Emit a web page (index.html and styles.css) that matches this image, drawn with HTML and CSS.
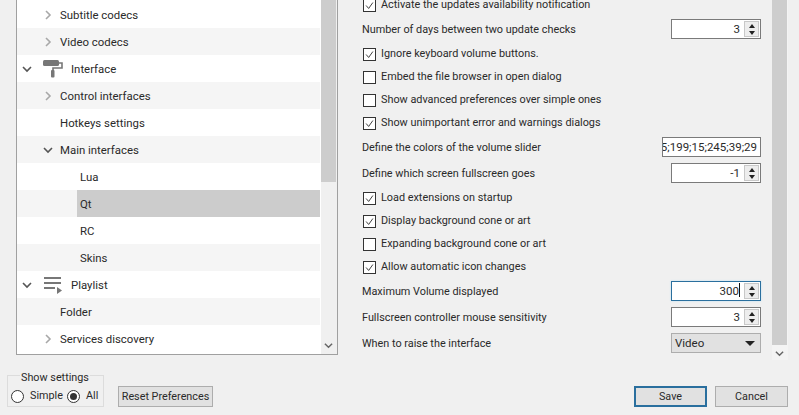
FILE: index.html
```html
<!DOCTYPE html>
<html lang="en">
<head>
<meta charset="utf-8">
<title>Preferences</title>
<link rel="stylesheet" href="styles.css">
</head>
<body>
<div class="window">
  <div class="panes">
    <div class="tree">
      <div class="tree-list">
        <div class="row lvl1"><svg class="chev" viewBox="0 0 10 10"><path d="M3 1l4 4-4 4"/></svg><span>Subtitle codecs</span></div>
        <div class="row alt lvl1"><svg class="chev" viewBox="0 0 10 10"><path d="M3 1l4 4-4 4"/></svg><span>Video codecs</span></div>
        <div class="row lvl0"><svg class="chev dark" viewBox="0 0 10 10"><path d="M1 3l4 4 4-4"/></svg>
          <svg class="cat" viewBox="0 0 20 18"><rect x="0" y="0" width="16" height="6" rx="1.5"/><path class="roller" d="M16 3h3v5h-9v3"/><rect x="8" y="10" width="3.5" height="7.5" rx="1"/></svg><span>Interface</span></div>
        <div class="row alt lvl1"><svg class="chev" viewBox="0 0 10 10"><path d="M3 1l4 4-4 4"/></svg><span>Control interfaces</span></div>
        <div class="row lvl1"><i class="chev"></i><span>Hotkeys settings</span></div>
        <div class="row alt lvl1"><svg class="chev dark" viewBox="0 0 10 10"><path d="M1 3l4 4 4-4"/></svg><span>Main interfaces</span></div>
        <div class="row lvl2"><span>Lua</span></div>
        <div class="row lvl2 selected"><span>Qt</span></div>
        <div class="row lvl2"><span>RC</span></div>
        <div class="row alt lvl2"><span>Skins</span></div>
        <div class="row lvl0"><svg class="chev dark" viewBox="0 0 10 10"><path d="M1 3l4 4 4-4"/></svg>
          <svg class="cat" viewBox="0 0 20 18"><rect x="1" y="1" width="17" height="2"/><rect x="1" y="6" width="17" height="2"/><rect x="1" y="11" width="11" height="2"/><path d="M14 11l5 3.5-5 3.5z"/></svg><span>Playlist</span></div>
        <div class="row alt lvl1"><i class="chev"></i><span>Folder</span></div>
        <div class="row lvl1"><svg class="chev" viewBox="0 0 10 10"><path d="M3 1l4 4-4 4"/></svg><span>Services discovery</span></div>
      </div>
      <div class="vbar tree-bar">
        <div class="thumb"></div>
        <svg class="down" viewBox="0 0 10 10"><path d="M1 3l4 4 4-4"/></svg>
      </div>
    </div>
    <div class="settings">
      <div class="form">
        <div class="check on"><b><svg viewBox="0 0 13 13"><path d="M2.5 6.5l3 3.5 5-7"/></svg></b>Activate the updates availability notification</div>
        <div class="field"><span>Number of days between two update checks</span><div class="spin"><span class="val">3</span><div class="arrows"><u class="up"></u><u class="dn"></u></div></div></div>
        <div class="check on"><b><svg viewBox="0 0 13 13"><path d="M2.5 6.5l3 3.5 5-7"/></svg></b>Ignore keyboard volume buttons.</div>
        <div class="check"><b></b>Embed the file browser in open dialog</div>
        <div class="check"><b></b>Show advanced preferences over simple ones</div>
        <div class="check on"><b><svg viewBox="0 0 13 13"><path d="M2.5 6.5l3 3.5 5-7"/></svg></b>Show unimportant error and warnings dialogs</div>
        <div class="field"><span>Define the colors of the volume slider</span><div class="line"><span>5;199;15;245;39;29</span></div></div>
        <div class="field"><span>Define which screen fullscreen goes</span><div class="spin"><span class="val">-1</span><div class="arrows"><u class="up"></u><u class="dn"></u></div></div></div>
        <div class="check on"><b><svg viewBox="0 0 13 13"><path d="M2.5 6.5l3 3.5 5-7"/></svg></b>Load extensions on startup</div>
        <div class="check on"><b><svg viewBox="0 0 13 13"><path d="M2.5 6.5l3 3.5 5-7"/></svg></b>Display background cone or art</div>
        <div class="check"><b></b>Expanding background cone or art</div>
        <div class="check on"><b><svg viewBox="0 0 13 13"><path d="M2.5 6.5l3 3.5 5-7"/></svg></b>Allow automatic icon changes</div>
        <div class="field"><span>Maximum Volume displayed</span><div class="spin focus"><span class="val">300<em class="caret"></em></span><div class="arrows"><u class="up"></u><u class="dn"></u></div></div></div>
        <div class="field"><span>Fullscreen controller mouse sensitivity</span><div class="spin"><span class="val">3</span><div class="arrows"><u class="up"></u><u class="dn"></u></div></div></div>
        <div class="field"><span>When to raise the interface</span><div class="combo"><span>Video</span><u class="dn big"></u></div></div>
      </div>
      <div class="vbar main-bar">
        <div class="thumb"></div>
        <svg class="down" viewBox="0 0 10 10"><path d="M1 3l4 4 4-4"/></svg>
      </div>
    </div>
  </div>
  <div class="footer">
    <div class="group">
      <div class="legend">Show settings</div>
      <div class="radios">
        <span class="radio"><b></b>Simple</span>
        <span class="radio on"><b></b>All</span>
      </div>
    </div>
    <button class="btn reset">Reset Preferences</button>
    <div class="spacer"></div>
    <button class="btn primary">Save</button>
    <button class="btn">Cancel</button>
  </div>
</div>
</body>
</html>
```
FILE: styles.css
```css
* { box-sizing: border-box; }
html, body { margin: 0; padding: 0; height: 100%; overflow: hidden; }
body {
  background: #f0f0f0;
  color: #2a2a2a;
  font: 11.4px/16px Roboto, "Noto Sans", sans-serif;
}
.window { width: 799px; height: 415px; display: flex; flex-direction: column; overflow: hidden; }
.panes { display: flex; height: 360px; flex: none; }

/* tree */
.tree {
  margin-left: 16px;
  width: 322px;
  height: 355px;
  display: flex;
  background: #fff;
  border: 1px solid #a0a0a0;
  border-top: 0;
}
.tree-list { width: 303px; padding-top: 1px; }
.row { height: 27px; display: flex; align-items: center; background: #fff; white-space: nowrap; }
.row.alt { background: #f5f5f5; }
.lvl0 { padding-left: 5px; }
.lvl1 { padding-left: 26px; }
.lvl2 { padding-left: 63px; }
.chev { width: 10px; height: 10px; margin-right: 7px; flex: none; fill: none; stroke: #a8a8a8; stroke-width: 1.6; display: block; }
.chev.dark { stroke: #555; }
.cat { width: 20px; height: 18px; flex: none; margin-left: 4px; margin-right: 8px; fill: #777; }
.cat .roller { fill: none; stroke: #777; stroke-width: 1.6; }
.row.selected { background: linear-gradient(to right, #f5f5f5 60px, #cccccc 60px); }

/* scrollbars */
.vbar { position: relative; background: #f0f0f0; }
.tree-bar { width: 17px; padding-left: 1px; background: linear-gradient(to right, #fff 1px, #f0f0f0 1px); }
.main-bar { width: 16px; height: 360px; margin-left: 11px; background: #f4f4f4; }
.thumb { background: #cdcdcd; width: 15px; }
.tree-bar .thumb { height: 182px; }
.main-bar .thumb { height: 345px; }
.down { position: absolute; left: 3px; width: 9px; height: 9px; fill: none; stroke: #666; stroke-width: 1.6; }
.tree-bar .down { top: 341px; left: 4px; }
.main-bar .down { top: 349px; }

/* form */
.settings { display: flex; margin-left: 24px; height: 360px; overflow: hidden; }
.form { width: 399px; display: flex; flex-direction: column; gap: 6px; margin-top: -4px; font-size: 10.85px; }
.check { height: 17px; padding-top: 1px; display: flex; align-items: center; white-space: nowrap; }
.check b {
  width: 13px; height: 13px; margin-left: 1px; margin-right: 5px; flex: none;
  background: #fff; border: 1px solid #333; display: block;
}
.check b svg { display: block; width: 11px; height: 11px; fill: none; stroke: #333; stroke-width: 1.1; }
.field { height: 20px; display: flex; align-items: center; justify-content: space-between; white-space: nowrap; }
.field > span { position: relative; top: 1px; }
.spin, .line, .combo { height: 20px; display: flex; align-items: center; font-size: 11.5px; }
.spin { width: 90px; background: #fff; border: 1px solid #7a7a7a; padding-right: 1px; }
.spin.focus { border-color: #2a6f9e; box-shadow: 0 0 2px #bfe0f2; }
.val { flex: 1; text-align: right; padding-right: 4px; }
.caret { display: inline-block; width: 1px; height: 14px; background: #111; vertical-align: -2px; }
.arrows { width: 15px; height: 16px; display: flex; flex-direction: column; justify-content: space-around; align-items: center; background: #ededed; border: 1px solid #c8c8c8; }
.arrows u, .combo u { display: block; width: 0; height: 0; border-left: 3.5px solid transparent; border-right: 3.5px solid transparent; }
.up { border-bottom: 4px solid #222; }
.dn { border-top: 4px solid #222; }
.line { width: 99px; background: #fff; border: 1px solid #7a7a7a; overflow: hidden; justify-content: flex-end; padding-right: 3px; }
.combo { width: 90px; background: #e1e1e1; border: 1px solid #adadad; padding: 0 3px; justify-content: space-between; }
.combo .big { border-left-width: 5px; border-right-width: 5px; border-top-width: 5px; margin-right: 2px; }

/* footer */
.footer { flex: 1; display: flex; align-items: flex-end; padding: 0 11px 8px 7px; font-size: 10.8px; }
.group { width: 97px; height: 32px; flex: none; border: 1px solid #dcdcdc; position: relative; padding: 12px 0 0 3px; }
.legend { position: absolute; left: 12px; top: -6px; background: #f0f0f0; padding: 0 1px; line-height: 15px; height: 15px; }
.radios { display: flex; gap: 7px; }
.radio { display: flex; align-items: center; gap: 6px; line-height: 16px; flex: none; }
.radio:first-child { width: 49px; }
.radio b { width: 13px; height: 13px; flex: none; border-radius: 50%; border: 1px solid #333; background: #fff; display: block; position: relative; }
.radio.on b::after { content: ""; position: absolute; inset: 2px; border-radius: 50%; background: #333; }
.btn {
  width: 73px; height: 21px; padding: 0;
  font: inherit; color: #2a2a2a;
  background: #e1e1e1; border: 1px solid #adadad;
  margin-left: 8px;
  white-space: nowrap;
}
.reset { width: 95px; margin-left: 14px; }
.primary { border: 2px solid #2a6f9e; }
.spacer { flex: 1; }
```
